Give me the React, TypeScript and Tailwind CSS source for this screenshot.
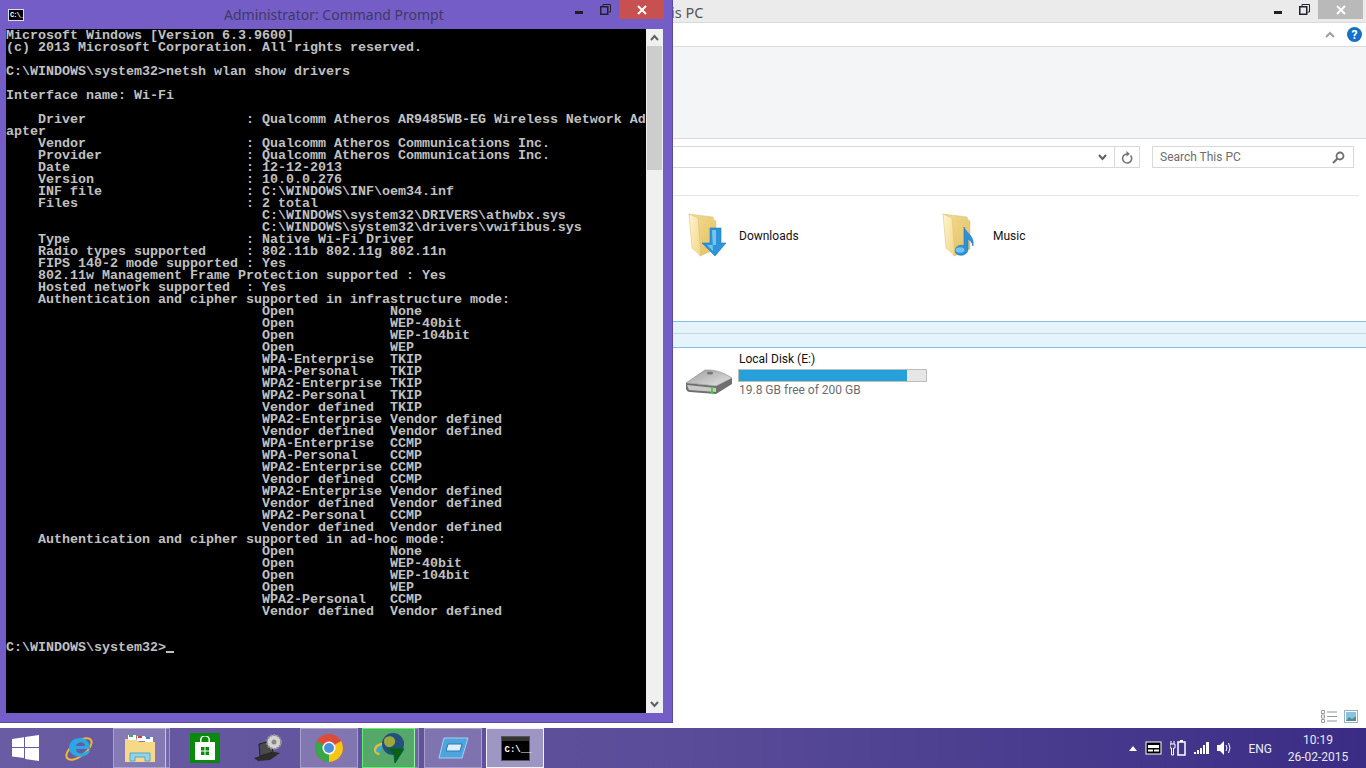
const consoleText = String.raw`Microsoft Windows [Version 6.3.9600]
(c) 2013 Microsoft Corporation. All rights reserved.

C:\WINDOWS\system32>netsh wlan show drivers

Interface name: Wi-Fi

    Driver                    : Qualcomm Atheros AR9485WB-EG Wireless Network Ad
apter
    Vendor                    : Qualcomm Atheros Communications Inc.
    Provider                  : Qualcomm Atheros Communications Inc.
    Date                      : 12-12-2013
    Version                   : 10.0.0.276
    INF file                  : C:\WINDOWS\INF\oem34.inf
    Files                     : 2 total
                                C:\WINDOWS\system32\DRIVERS\athwbx.sys
                                C:\WINDOWS\system32\drivers\vwifibus.sys
    Type                      : Native Wi-Fi Driver
    Radio types supported     : 802.11b 802.11g 802.11n
    FIPS 140-2 mode supported : Yes
    802.11w Management Frame Protection supported : Yes
    Hosted network supported  : Yes
    Authentication and cipher supported in infrastructure mode:
                                Open            None
                                Open            WEP-40bit
                                Open            WEP-104bit
                                Open            WEP
                                WPA-Enterprise  TKIP
                                WPA-Personal    TKIP
                                WPA2-Enterprise TKIP
                                WPA2-Personal   TKIP
                                Vendor defined  TKIP
                                WPA2-Enterprise Vendor defined
                                Vendor defined  Vendor defined
                                WPA-Enterprise  CCMP
                                WPA-Personal    CCMP
                                WPA2-Enterprise CCMP
                                Vendor defined  CCMP
                                WPA2-Enterprise Vendor defined
                                Vendor defined  Vendor defined
                                WPA2-Personal   CCMP
                                Vendor defined  Vendor defined
    Authentication and cipher supported in ad-hoc mode:
                                Open            None
                                Open            WEP-40bit
                                Open            WEP-104bit
                                Open            WEP
                                WPA2-Personal   CCMP
                                Vendor defined  Vendor defined


C:\WINDOWS\system32>`;

function WindowButtons({ closeClass }: { closeClass: string }) {
	return (
		<div className="flex items-start">
			<div className="flex h-[19px] w-[25px] items-center justify-center pt-[5px]">
				<div className="h-[3px] w-[8px] bg-[#1f1f2a]" />
			</div>
			<div className="flex h-[19px] w-[28px] items-center justify-center">
				<svg width="11" height="11" viewBox="0 0 11 11" fill="none" stroke="#22222e">
					<path d="M3 2.500V.500h7.500v7.500H8.500" />
					<rect x="0.750" y="2.750" width="7" height="7.500" strokeWidth="1.500" />
				</svg>
			</div>
			<div className={`flex h-[19px] w-[45px] items-center justify-center ${closeClass}`}>
				<svg width="10" height="10" viewBox="0 0 10 10" stroke="#fff" strokeWidth="2">
					<path d="M1 1l8 8M9 1l-8 8" />
				</svg>
			</div>
		</div>
	);
}

function Folder({ children }: { children?: React.ReactNode }) {
	return (
		<svg width="48" height="48" viewBox="0 0 48 48">
			<defs>
				<linearGradient id="foldback" x1="0" y1="0" x2="1" y2="1">
					<stop offset="0" stopColor="#f3dc96" />
					<stop offset="1" stopColor="#e3bf5e" />
				</linearGradient>
				<linearGradient id="foldflap" x1="0" y1="0" x2="1" y2="1">
					<stop offset="0" stopColor="#fff6cf" />
					<stop offset="1" stopColor="#f0d585" />
				</linearGradient>
			</defs>
			<path d="M1 2L25 5l1 3 2 1v28l-16 7z" fill="url(#foldback)" stroke="#d9bf78" strokeWidth=".5" />
			<path d="M1 2l9 4 3 38-9-8z" fill="url(#foldflap)" stroke="#d9bf78" strokeWidth=".5" />
			{children}
		</svg>
	);
}

function DownloadFolder() {
	return (
		<Folder>
			<path d="M22 16h11v15h5L27 44 14 31h8z" fill="#2f93d9" stroke="#1f78bd" strokeWidth=".6" />
			<path d="M24 18h4v15h-9l6 6z" fill="#74c4f0" />
		</Folder>
	);
}

function MusicFolder() {
	return (
		<Folder>
			<path d="M22 15c2 6 11 9 9 19-1-4-3-6-5-7v10c0 5-5 7-9 6-5-1-5-7-1-9 2-1 4-1 6 0z" fill="#2e90d6" stroke="#1f78bd" strokeWidth=".6" />
			<ellipse cx="18" cy="38" rx="4.500" ry="2.800" fill="#74c4f0" />
		</Folder>
	);
}

function DiskIcon() {
	return (
		<svg width="48" height="28" viewBox="0 0 48 28">
			<defs>
				<linearGradient id="disktop" x1="0" y1="0" x2="1" y2="1">
					<stop offset="0" stopColor="#9c9c9c" />
					<stop offset="1" stopColor="#e6e6e6" />
				</linearGradient>
			</defs>
			<path d="M0 15v6q1 3 4 3l26 2 16-10v-6L30 18z" fill="#6f6f6f" />
			<path d="M1 17l29 3v4L3 22z" fill="#c9c9c9" />
			<path d="M0 15L19 2q14-1 27 8L30 18z" fill="url(#disktop)" stroke="#777" strokeWidth=".5" />
			<ellipse cx="24" cy="5" rx="3" ry="1.500" fill="#777" />
			<rect x="25" y="19" width="2" height="7" fill="#49d13c" />
		</svg>
	);
}

function ConsoleWindow() {
	return (
		<div className="absolute left-0 top-0 flex h-[723px] w-[673px] flex-col border-r border-b border-[#5b4aa3] bg-[#745dc6]">
			<div className="flex h-[29px] shrink-0 items-start">
				<div className="ml-[8px] mt-[9px] flex h-[12px] w-[16px] items-center border border-[#ddd] bg-black pl-[1px]">
					<span className="font-['Liberation_Mono'] text-[7px] font-bold leading-none tracking-[-1px] text-white">C:\_</span>
				</div>
				<div className="ml-[200px] mt-[5px] font-['Noto_Sans'] text-[14px] leading-[20px] text-[#3f3a66]">
					Administrator: Command Prompt
				</div>
				<div className="ml-auto mr-[8px]">
					<WindowButtons closeClass="bg-[#c75050]" />
				</div>
			</div>
			<div className="ml-[6px] mr-[9px] flex h-[684px] shrink-0">
				<pre className="w-[640px] bg-black pt-[1px] font-['Liberation_Mono'] text-[13.330px] font-bold leading-[12px] text-[#c0c0c0]">
					{consoleText}
					<span className="relative top-[2px] inline-block h-[2px] w-[8px] bg-[#c0c0c0] align-baseline" />
				</pre>
				<div className="flex w-[17px] flex-col bg-[#f0f0f0]">
					<div className="flex h-[17px] items-center justify-center">
						<svg width="9" height="7" viewBox="0 0 9 7" fill="none" stroke="#606060" strokeWidth="2">
							<path d="M1 6l3.500-4L8 6" />
						</svg>
					</div>
					<div className="mx-[1px] h-[124px] bg-[#cdcdcd]" />
					<div className="flex-1" />
					<div className="flex h-[17px] items-center justify-center">
						<svg width="9" height="7" viewBox="0 0 9 7" fill="none" stroke="#606060" strokeWidth="2">
							<path d="M1 1l3.500 4L8 1" />
						</svg>
					</div>
				</div>
			</div>
		</div>
	);
}

function ExplorerWindow() {
	return (
		<div className="absolute left-[600px] right-0 top-0 flex h-[728px] flex-col bg-white font-['Roboto'] text-[12px]">
			<div className="flex h-[23px] shrink-0 items-start justify-between border-b border-[#d9d9d9] bg-[#ebebeb]">
				<div className="ml-[54px] mt-[2px] font-['Noto_Sans'] text-[14.500px] leading-[20px] text-[#555]">This PC</div>
				<div className="mr-[3px]">
					<WindowButtons closeClass="bg-[#b9b9b9]" />
				</div>
			</div>
			<div className="flex h-[24px] shrink-0 items-center justify-end gap-[12px] border-b border-[#dadbdc] pr-[4px]">
				<svg width="10" height="7" viewBox="0 0 10 7" fill="none" stroke="#a0a0a0" strokeWidth="2">
					<path d="M1 6l4-4 4 4" />
				</svg>
				<div className="flex h-[15px] w-[15px] items-center justify-center rounded-full bg-[#1371c9] text-[12px] font-bold leading-none text-white">
					?
				</div>
			</div>
			<div className="h-[92px] shrink-0 border-b border-[#dadbdc] bg-[#f4f5f7]" />
			<div className="mr-[7px] flex h-[57px] shrink-0 items-start border-b border-[#e5e5e5] pt-[7px]">
				<div className="ml-[70px] flex h-[22px] w-[470px] items-center border border-[#d9d9d9]">
					<div className="flex flex-1 justify-end pr-[7px]">
						<svg width="9" height="7" viewBox="0 0 9 7" fill="none" stroke="#606060" strokeWidth="2">
							<path d="M1 1l3.500 4L8 1" />
						</svg>
					</div>
					<div className="flex h-full w-[25px] items-center justify-center border-l border-[#d9d9d9]">
						<svg width="12" height="13" viewBox="0 0 12 13" fill="none" stroke="#777" strokeWidth="1.600">
							<path d="M9.500 4.500A4.500 4.500 0 1 1 6 3" />
							<path d="M5.500 0v5.500L9 3z" fill="#777" stroke="none" />
						</svg>
					</div>
				</div>
				<div className="ml-[12px] flex h-[22px] w-[202px] items-center justify-between border border-[#d9d9d9] pl-[7px] pr-[8px] text-[12px] text-[#6d6d6d]">
					<span>Search This PC</span>
					<svg width="13" height="13" viewBox="0 0 13 13" fill="none" stroke="#707070">
						<circle cx="8" cy="5" r="3.500" strokeWidth="1.800" />
						<path d="M5.500 7.500L1 12" strokeWidth="2.200" />
					</svg>
				</div>
			</div>
			<div className="grid h-[125px] shrink-0 grid-cols-[254px_254px] pl-[88px] pt-[16px] text-[#111]">
				<div className="flex items-start gap-[3px]">
					<DownloadFolder />
					<span className="mt-[16px] leading-[16px]">Downloads</span>
				</div>
				<div className="flex items-start gap-[3px]">
					<MusicFolder />
					<span className="mt-[16px] leading-[16px]">Music</span>
				</div>
			</div>
			<div className="h-[27px] shrink-0 border-y border-[#85bfe0] bg-[#e5f3fb]">
				<div className="h-[12px] border-b border-[#c5d8e6]" />
			</div>
			<div className="flex shrink-0 pl-[86px] pt-[3px]">
				<div className="mt-[17px]">
					<DiskIcon />
				</div>
				<div className="ml-[5px] w-[188px]">
					<div className="h-[16px] leading-[16px] text-[#111]">Local Disk (E:)</div>
					<div className="-ml-[1px] mt-[2px] h-[13px] border border-[#bcbcbc] bg-[#e6e6e6]">
						<div className="h-full w-[90%] bg-[#26a0da]" />
					</div>
					<div className="mt-[1px] leading-[15px] text-[#6d6d6d]">19.8 GB free of 200 GB</div>
				</div>
			</div>
			<div className="flex flex-1 items-end justify-end gap-[7px] pb-[5px] pr-[8px]">
				<svg width="16" height="13" viewBox="0 0 16 13" fill="none">
					<path d="M.500.500h3v3h-3zM.500 5h3v3h-3zM.500 9.500h3v3h-3z" stroke="#9a9a9a" />
					<path d="M6 2h10M6 6.500h10M6 11h10" stroke="#8c96a0" />
				</svg>
				<svg width="14" height="13" viewBox="0 0 14 13">
					<rect x=".500" y=".500" width="13" height="12" fill="#fff" stroke="#9cb0c4" />
					<rect x="2" y="2" width="10" height="9" fill="#86c4e2" />
					<path d="M2 11l3-4 3 2 4-3v5z" fill="#4f8f8a" />
				</svg>
			</div>
		</div>
	);
}

function TaskButton({ width, active, green, stacked, children }: { width: string; active?: boolean; green?: boolean; stacked?: boolean; children: React.ReactNode }) {
	const tone = active
		? "border-[#f2f0fa] bg-white/40"
		: green
			? "border-[#5ef070] bg-[#55a86a]"
			: "border-white/30 bg-white/20";
	return (
		<div className="flex h-[40px] shrink-0">
			<div className={`flex h-full items-center justify-center border ${width} ${tone}`}>{children}</div>
			{stacked ? <div className="ml-[-1px] h-full w-[5px] border border-white/30 bg-white/10" /> : null}
		</div>
	);
}

function Taskbar() {
	return (
		<div className="absolute bottom-0 left-0 right-0 flex h-[40px] items-center bg-gradient-to-r from-[#6a5ca2] via-[#5a4c98] to-[#3a2c85] font-['Roboto']">
			<div className="flex w-[50px] shrink-0 justify-center">
				<svg width="27" height="26" viewBox="0 0 27 26" fill="#fff">
					<path d="M0 4l12-1.800V12H0zM13 2l14-2v12H13zM0 13h12v10L0 21.500zM13 13h14v13l-14-2z" />
				</svg>
			</div>
			<div className="flex w-[63px] shrink-0 justify-center pr-[3px]">
				<svg width="30" height="30" viewBox="0 0 30 30">
					<ellipse cx="14" cy="16" rx="15" ry="7" transform="rotate(-38 14 16)" fill="none" stroke="#f0b92c" strokeWidth="2" />
					<path d="M15 5a10 10 0 0 1 10 11H11c0 5 7 6 11 2h3c-3 8-20 8-21-3C4 9 9 5 15 5zm-4 8h9c0-5-8-5-9 0z" fill="#29a8e6" />
				</svg>
			</div>
			<TaskButton width="w-[53px]" stacked>
				<svg width="32" height="30" viewBox="0 0 32 30">
					<path d="M1 6h12l2 3h16v20H1z" fill="#f5d888" />
					<rect x="4" y="2" width="8" height="5" fill="#fff" />
					<rect x="5" y="2" width="4" height="2" fill="#3fae49" />
					<rect x="13" y="3" width="8" height="5" fill="#fff" />
					<rect x="14" y="3" width="4" height="2" fill="#d73b3b" />
					<rect x="21" y="4" width="8" height="5" fill="#fff" />
					<rect x="22" y="4" width="4" height="2" fill="#2a8ed6" />
					<path d="M6 28v-8h20v8h-5v-4H11v4z" fill="#8fd4ea" stroke="#5aa6c8" />
				</svg>
			</TaskButton>
			<div className="flex w-[65px] shrink-0 justify-center pl-[5px]">
				<div className="flex h-[30px] w-[30px] flex-col items-center justify-center bg-[#0a8a0a]">
					<svg width="22" height="24" viewBox="0 0 22 24" fill="#fff">
						<path d="M6 6V4a5 5 0 0 1 10 0v2h-1.500V4a3.500 3.500 0 0 0-7 0v2z" />
						<path d="M1 6h20v18H1z" />
						<path d="M7 11h3.500v3.500H7zM11.500 11H15v3.500h-3.500zM7 15.500h3.500V19H7zM11.500 15.500H15V19h-3.500z" fill="#0a8a0a" />
					</svg>
				</div>
			</div>
			<div className="flex w-[65px] shrink-0 justify-center">
				<svg width="30" height="28" viewBox="0 0 30 28">
					<path d="M1 24l6-2 14-4 6 1-10 7-12 1z" fill="#2c2c2c" />
					<path d="M6 10l12-3 2 11-13 4z" fill="#4a4a4a" stroke="#222" />
					<circle cx="21" cy="8" r="7" fill="#d4d4d4" stroke="#8d8d8d" strokeWidth="2" strokeDasharray="2 1.200" />
					<circle cx="21" cy="8" r="2.500" fill="#888" />
				</svg>
			</div>
			<TaskButton width="w-[58px]">
				<svg width="28" height="28" viewBox="0 0 28 28">
					<circle cx="14" cy="14" r="14" fill="#dd4b39" />
					<path d="M14 14L26.100 7A14 14 0 0 1 14 28z" fill="#f5c518" />
					<path d="M14 14L14 28A14 14 0 0 1 1.900 7z" fill="#3aa64a" />
					<circle cx="14" cy="14" r="6.500" fill="#fff" />
					<circle cx="14" cy="14" r="5" fill="#4a90d9" />
				</svg>
			</TaskButton>
			<div className="ml-[4px]">
				<TaskButton width="w-[53px]" green stacked>
					<svg width="32" height="30" viewBox="0 0 32 30">
						<path d="M1 17c0-5 6-8 11-7l-2 3c-3 0-5 2-5 5l2 4c-3 0-6-2-6-5z" fill="#e8c02c" />
						<path d="M3 18c0-4 4-6 8-6l-1 3c-2 0-3 1-3 3l1 2c-2 0-5-1-5-2z" fill="#3ba7dc" />
						<circle cx="20" cy="11" r="11" fill="#24507e" />
						<path d="M12 5c4-3 9-2 10 2s-3 8-7 7-5-6-3-9z" fill="#9aa83c" />
						<path d="M15 15l16 1-9 14-1-8z" fill="#0b5f16" stroke="#063" />
					</svg>
				</TaskButton>
			</div>
			<div className="ml-[5px]">
				<TaskButton width="w-[58px]">
					<svg width="32" height="24" viewBox="0 0 32 24">
						<path d="M7 2h24l-6 20H2z" fill="#4ea4dc" stroke="#9fd4f2" />
						<path d="M11 8h14l-2 7H9z" fill="#dceffa" stroke="#2b77b4" />
					</svg>
				</TaskButton>
			</div>
			<div className="ml-[4px]">
				<TaskButton width="w-[58px]" active>
					<div className="w-[29px] border border-[#555] bg-[#333]">
						<div className="h-[4px]" />
						<div className="flex h-[19px] items-center bg-black pl-[3px] font-['Liberation_Mono'] text-[9px] font-bold leading-none text-white">
							C:\__
						</div>
					</div>
				</TaskButton>
			</div>
			<div className="ml-auto flex items-center text-white">
				<svg width="8" height="5" viewBox="0 0 8 5" fill="#fff" className="mr-[8px]">
					<path d="M0 5l4-5 4 5z" />
				</svg>
				<svg width="17" height="14" viewBox="0 0 17 14" fill="none" className="mr-[8px]">
					<rect x="1" y="1" width="15" height="12" fill="#000" stroke="#fff" />
					<path d="M3 4h11v3H3zM3 8.500h5v2H3zM9 8.500h5v2H9z" fill="#fff" />
				</svg>
				<svg width="16" height="16" viewBox="0 0 16 16" fill="none" className="mr-[8px]">
					<path d="M1 1v3M4 1v3M0 4h5v4H3.500v7h-2V8H0z" stroke="#fff" />
					<rect x="8" y="2" width="7" height="13" stroke="#fff" strokeWidth="1.500" />
					<rect x="10" y="0" width="3" height="2" fill="#fff" />
				</svg>
				<svg width="15" height="12" viewBox="0 0 15 12" fill="#fff" className="mr-[8px]">
					<path d="M0 10h2v2H0zM3 8h2v4H3zM6 6h2v6H6zM9 3h2v9H9zM12 0h3v12h-3z" />
				</svg>
				<svg width="15" height="14" viewBox="0 0 15 14" fill="none" className="mr-[16px]">
					<path d="M0 4h3l4-4v14l-4-4H0z" fill="#fff" />
					<path d="M9 4q2 3 0 6M11.500 2q3 5 0 10" stroke="#fff" />
				</svg>
				<span className="mr-[16px] pt-[1px] text-[12px] leading-none text-[#eee]">ENG</span>
				<div className="mr-[18px] flex w-[60px] flex-col items-center pt-[2px] text-[12px] leading-[17px] text-[#e8e8ee]">
					<span>10:19</span>
					<span className="whitespace-nowrap">26-02-2015</span>
				</div>
			</div>
		</div>
	);
}

export default function App() {
	return (
		<div className="relative h-[768px] w-[1366px] overflow-hidden bg-white">
			<ExplorerWindow />
			<ConsoleWindow />
			<Taskbar />
		</div>
	);
}
